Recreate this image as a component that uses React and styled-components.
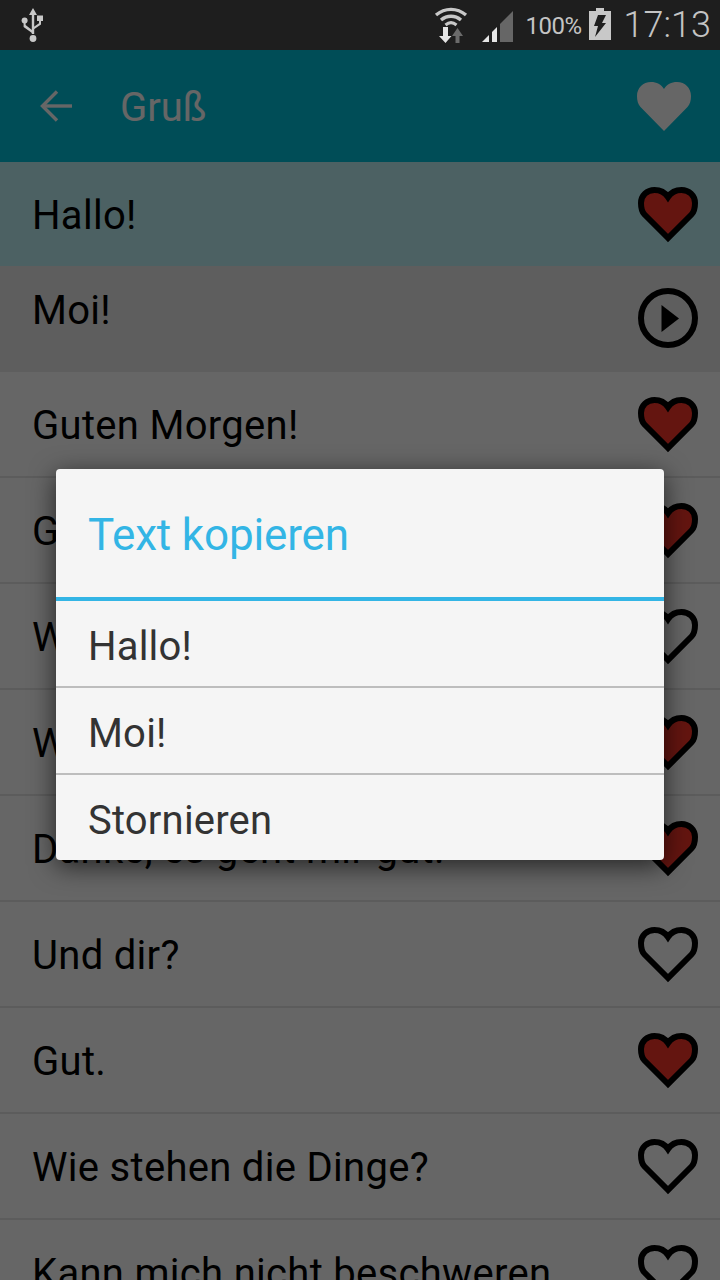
import React from "react";
import styled, { createGlobalStyle } from "styled-components";

const GlobalStyle = createGlobalStyle`
  html, body {
    margin: 0;
    padding: 0;
    background: #fff;
    font-family: Roboto, "Liberation Sans", sans-serif;
  }
`;

const Screen = styled.div`
  width: 720px;
  height: 1280px;
  display: flex;
  flex-direction: column;
  overflow: hidden;
`;

const StatusBar = styled.div`
  height: 50px;
  flex: none;
  display: flex;
  align-items: center;
  padding: 0 9px 0 21px;
  background: #1e1e1e;
  color: #c4c4c4;
`;

const StatusRight = styled.div`
  margin-left: auto;
  display: flex;
  align-items: center;
`;

const Percent = styled.span`
  font-size: 24px;
  letter-spacing: -0.5px;
  margin: 2px 7px 0 13px;
`;

const Clock = styled.span`
  font-size: 36px;
  font-weight: 300;
  margin-left: 13px;
`;

const SignalSvg = styled.svg`
  margin: 2px 0 0 14px;
`;

const BatterySvg = styled.svg`
  margin-bottom: 2px;
`;

const Body = styled.div`
  position: relative;
  flex: 1;
  min-height: 0;
  overflow: hidden;
`;

const Header = styled.div`
  height: 112px;
  display: flex;
  align-items: center;
  padding: 0 29px 0 40px;
  box-sizing: border-box;
  background: #00c1d9;
  color: #fff;
`;

const Title = styled.h1`
  margin: 2px 0 0 48px;
  font-size: 40px;
  font-weight: 400;
`;

const HeaderHeart = styled.svg`
  margin-left: auto;
`;

const Row = styled.div`
  height: ${(p) => (p.$first ? "104px" : "106px")};
  flex: none;
  box-sizing: border-box;
  display: flex;
  align-items: center;
  padding: 0 22px 0 32px;
  background: ${(p) => p.$bg || "#fff"};
  border-bottom: ${(p) => (p.$plain ? "none" : "2px solid #e6e6e6")};
`;

const RowText = styled.div`
  flex: 1;
  font-size: 40px;
  letter-spacing: 0.3px;
  color: #000;
  white-space: nowrap;
  padding-top: ${(p) => (p.$raised ? "0" : "2px")};
  padding-bottom: ${(p) => (p.$raised ? "18px" : "0")};
`;

const HeartSvg = styled.svg`
  margin-top: 1px;
`;

const PlaySvg = styled.svg`
  margin-bottom: 2px;
`;

const Scrim = styled.div`
  position: absolute;
  inset: 0;
  background: rgba(0, 0, 0, 0.6);
  display: flex;
  align-items: center;
  padding: 0 56px 1px;
`;

const Dialog = styled.div`
  flex: 1;
  background: #f5f5f5;
  border-radius: 4px;
  box-shadow: 0 6px 26px rgba(0, 0, 0, 0.65);
`;

const DialogTitle = styled.div`
  height: 132px;
  box-sizing: border-box;
  display: flex;
  align-items: center;
  padding: 4px 0 0 32px;
  font-size: 44px;
  letter-spacing: -0.15px;
  color: #33b5e5;
  border-bottom: 4px solid #33b5e5;
`;

const DialogItem = styled.div`
  height: ${(p) => (p.$last ? "85px" : "87px")};
  box-sizing: border-box;
  display: flex;
  align-items: center;
  padding: 6px 0 0 32px;
  font-size: 40px;
  letter-spacing: 0.2px;
  color: #333;
  border-bottom: ${(p) => (p.$last ? "none" : "2px solid #bdbdbd")};
`;

const HEART =
  "M30 51 L6.5 27.5 C4 25 3 21 3 16 C3 8.5 9 3 16.5 3 C22 3 27 5.5 30 10 C33 5.5 38 3 43.5 3 C51 3 57 8.5 57 16 C57 21 56 25 53.5 27.5 Z";

const Heart = ({ filled }) => (
  <HeartSvg width="60" height="56" viewBox="0 0 60 56">
    <path
      d={HEART}
      fill={filled ? "#fb3529" : "none"}
      stroke="#000"
      strokeWidth="6"
      strokeLinejoin="miter"
    />
  </HeartSvg>
);

const PlayCircle = () => (
  <PlaySvg width="60" height="60" viewBox="0 0 60 60">
    <circle cx="30" cy="30" r="27" fill="none" stroke="#000" strokeWidth="6" />
    <path d="M23.5 17 L41 30.5 L23.5 44 Z" fill="#000" />
  </PlaySvg>
);

const UsbIcon = () => (
  <svg width="24" height="36" viewBox="0 0 24 36" fill="#c8c8c8">
    <path d="M12 1 L16 8 H13.2 V27 H10.8 V8 H8 Z" />
    <circle cx="12" cy="31.5" r="3.4" />
    <circle cx="3.6" cy="13.5" r="3" />
    <rect x="16" y="8.5" width="6" height="5.5" />
    <path d="M2.6 15 H4.6 V18 L11 23 V26 L2.6 20 Z" />
    <path d="M18 13 H20 V17.5 L12.6 22.5 V20 L18 16.2 Z" />
  </svg>
);

const WifiIcon = () => (
  <svg width="34" height="36" viewBox="0 0 34 36" fill="none">
    <path d="M2 8 C11 0.5 23 0.5 32 8" stroke="#c8c8c8" strokeWidth="3.4" />
    <path d="M7 13 C13 8 21 8 27 13" stroke="#c8c8c8" strokeWidth="3.4" />
    <path d="M11.5 18 C15 15 19 15 22.5 18" stroke="#c8c8c8" strokeWidth="3" />
    <path d="M18 29 L23.5 21 L29 29 H25.5 V36 H21.5 V29 Z" fill="#6b6b6b" />
    <path d="M9 20 H14 V29 H17.5 L11.5 36 L5 29 H9 Z" fill="#e4e4e4" />
  </svg>
);

const SignalIcon = () => (
  <SignalSvg width="31" height="31" viewBox="0 0 31 31">
    <path d="M0 31 L7 24 V31 Z" fill="#e6e6e6" />
    <path d="M10 21 L15 16 V31 H10 Z" fill="#e6e6e6" />
    <path d="M18 13 L31 0 V31 H18 Z" fill="#666" />
  </SignalSvg>
);

const BatteryIcon = () => (
  <BatterySvg width="22" height="32" viewBox="0 0 22 32">
    <path d="M7 0 H15 V3 H22 V32 H0 V3 H7 Z" fill="#c8c8c8" />
    <path d="M9 7 H17 L13 15 H17 L6 29 L9 18 H5 Z" fill="#1e1e1e" />
  </BatterySvg>
);

const BackArrow = () => (
  <svg width="32" height="32" viewBox="0 0 32 32" fill="none" stroke="#fff" strokeWidth="3.4">
    <path d="M32 16 H3" />
    <path d="M17 1.5 L2.5 16 L17 30.5" />
  </svg>
);

const rows = [
  { text: "Guten Morgen!", filled: true },
  { text: "Guten Tag!", filled: true },
  { text: "Wie geht's?", filled: false },
  { text: "Wie geht es dir?", filled: true },
  { text: "Danke, es geht mir gut.", filled: true },
  { text: "Und dir?", filled: false },
  { text: "Gut.", filled: true },
  { text: "Wie stehen die Dinge?", filled: false },
  { text: "Kann mich nicht beschweren", filled: false },
];

export default function App() {
  return (
    <Screen>
      <GlobalStyle />
      <StatusBar>
        <UsbIcon />
        <StatusRight>
          <WifiIcon />
          <SignalIcon />
          <Percent>100%</Percent>
          <BatteryIcon />
          <Clock>17:13</Clock>
        </StatusRight>
      </StatusBar>
      <Body>
        <Header>
          <BackArrow />
          <Title>Gruß</Title>
          <HeaderHeart width="54" height="49" viewBox="0 0 54 49">
            <path
              d="M27 49 L3.5 25 C1 22.5 0 18.5 0 14 C0 6 6 0 14 0 C19.5 0 24.5 2.5 27 7 C29.5 2.5 34.5 0 40 0 C48 0 54 6 54 14 C54 18.5 53 22.5 50.5 25 Z"
              fill="#fff"
            />
          </HeaderHeart>
        </Header>
        <Row $first $plain $bg="#bdf2f8">
          <RowText>Hallo!</RowText>
          <Heart filled />
        </Row>
        <Row $plain $bg="#ebebeb">
          <RowText $raised>Moi!</RowText>
          <PlayCircle />
        </Row>
        {rows.map((r) => (
          <Row key={r.text}>
            <RowText>{r.text}</RowText>
            <Heart filled={r.filled} />
          </Row>
        ))}
        <Scrim>
          <Dialog>
            <DialogTitle>Text kopieren</DialogTitle>
            <DialogItem>Hallo!</DialogItem>
            <DialogItem>Moi!</DialogItem>
            <DialogItem $last>Stornieren</DialogItem>
          </Dialog>
        </Scrim>
      </Body>
    </Screen>
  );
}
